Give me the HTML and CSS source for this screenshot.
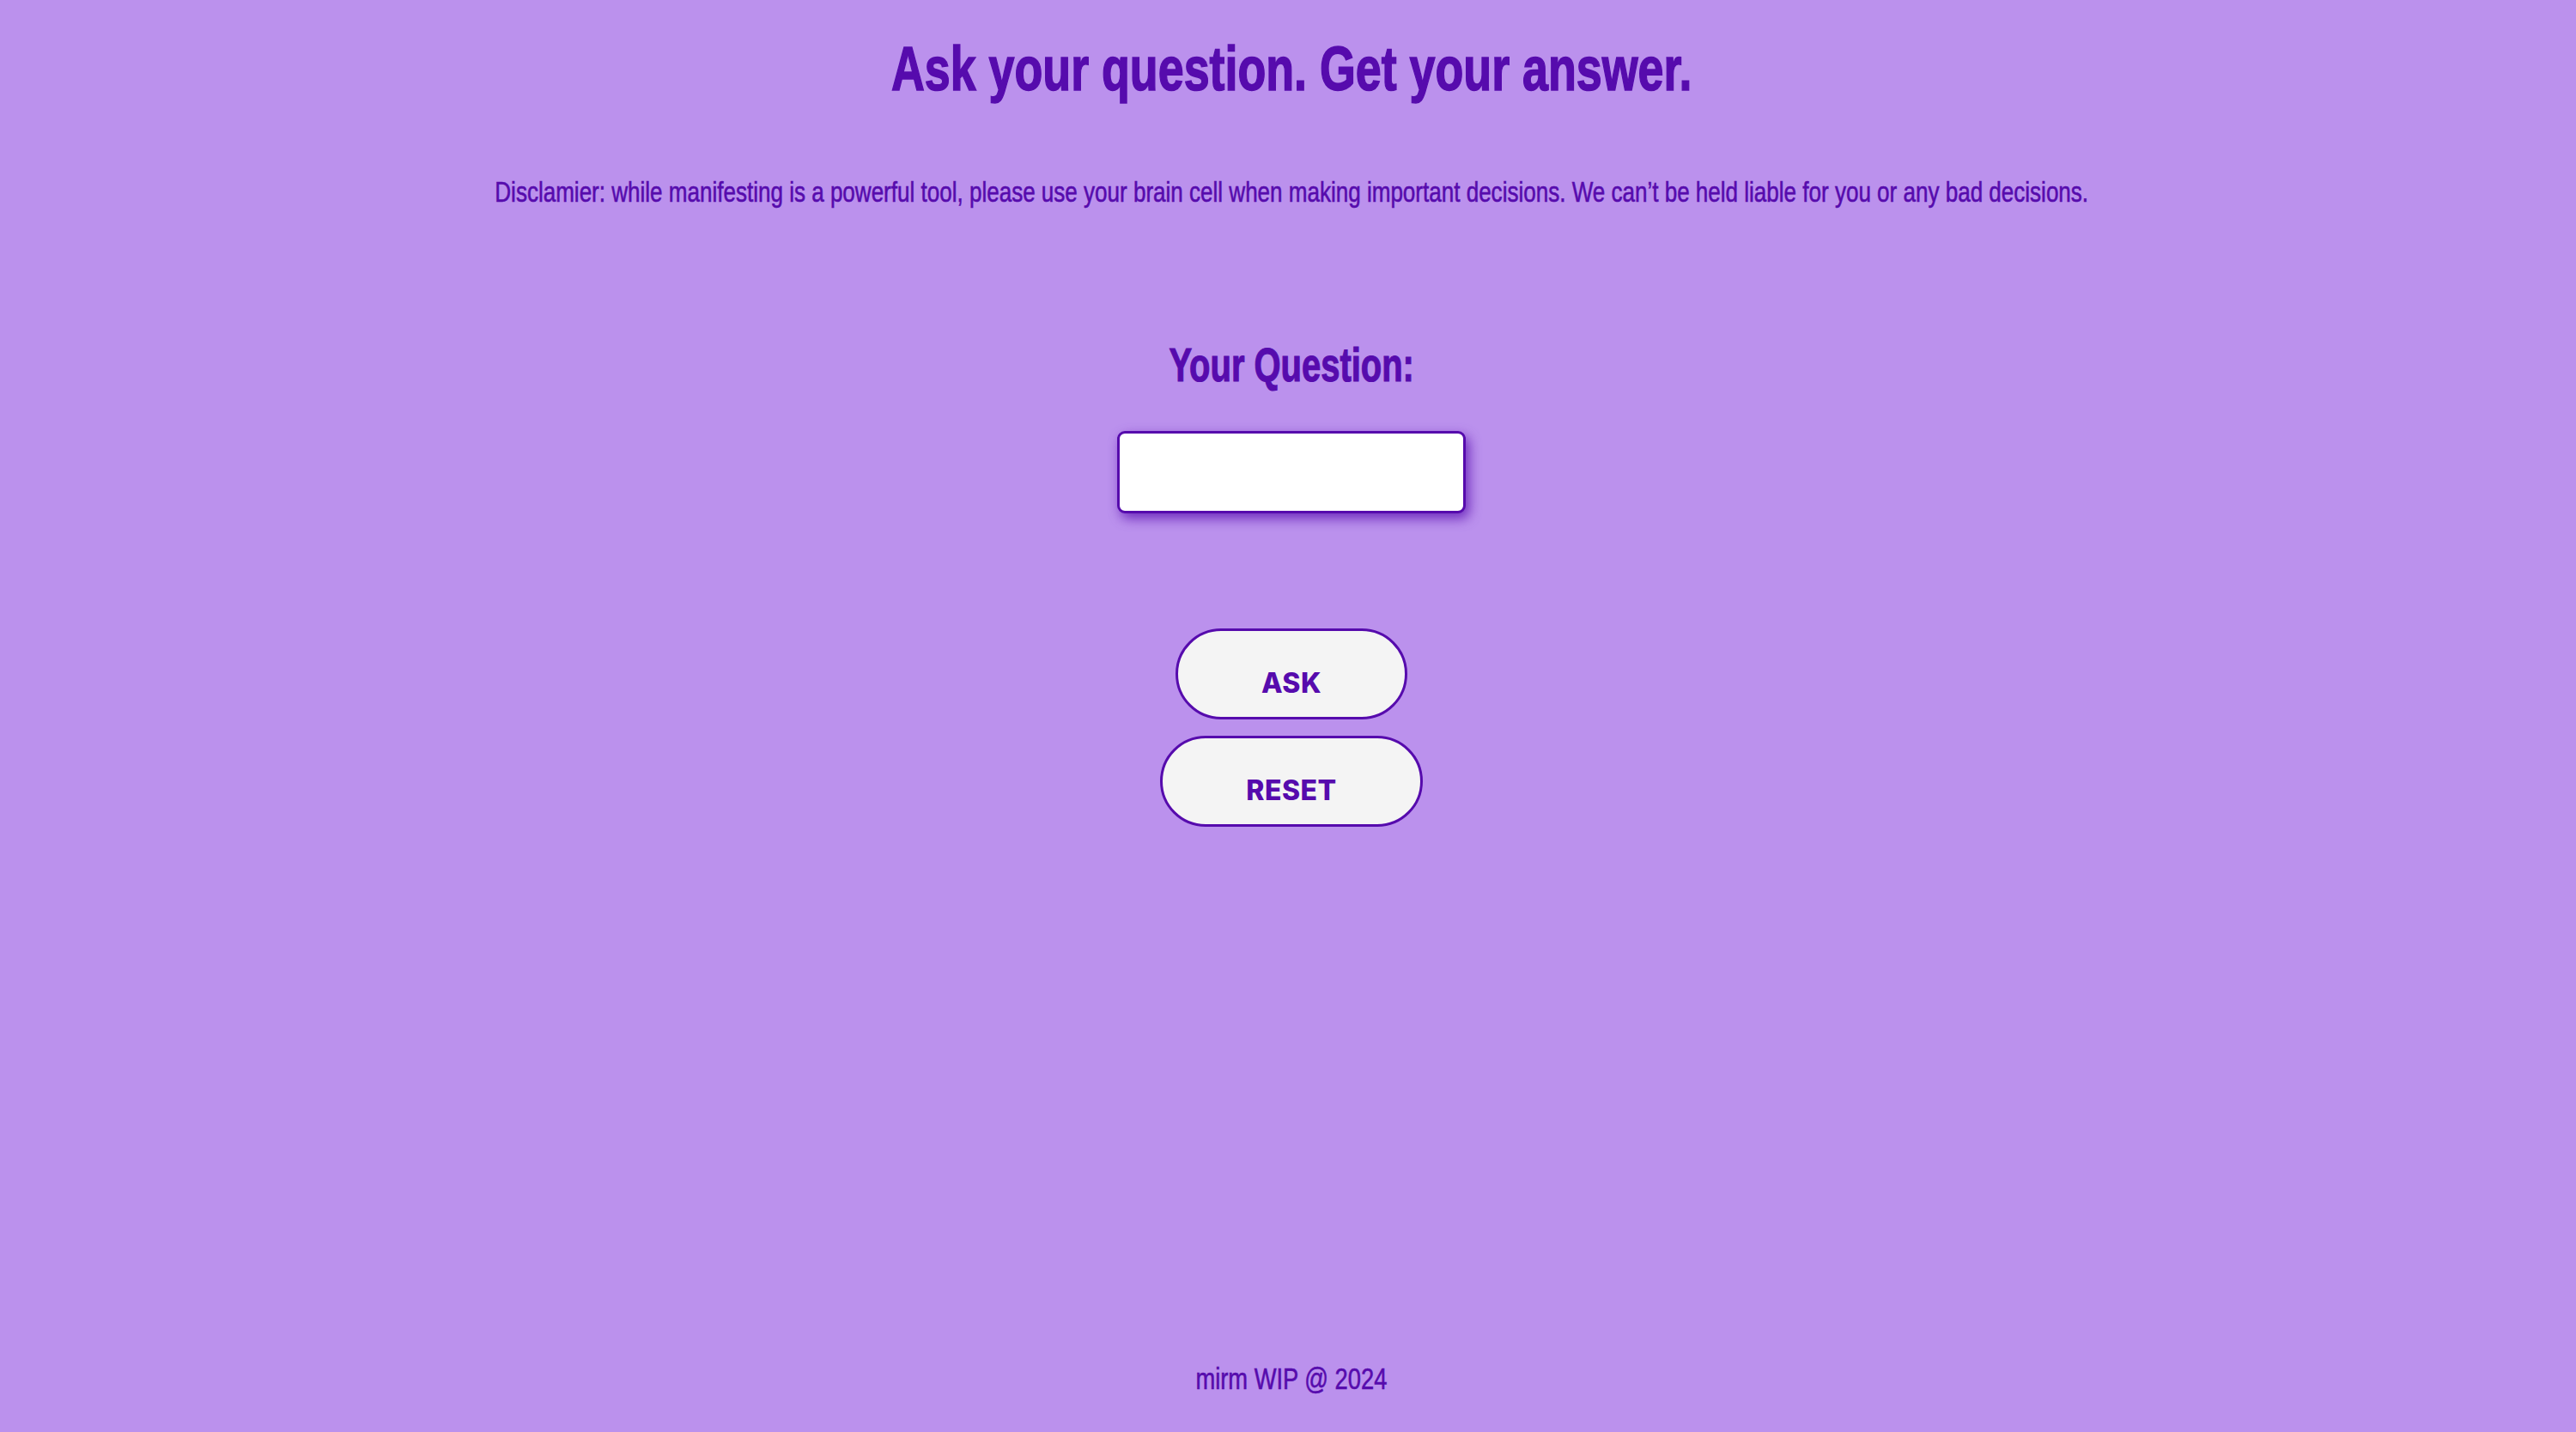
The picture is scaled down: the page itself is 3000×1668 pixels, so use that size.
FILE: index.html
```html
<!DOCTYPE html>
<html lang="en">
<head>
<meta charset="utf-8">
<title>Ask your question</title>
<link rel="stylesheet" href="styles.css">
</head>
<body>
<div class="page">
  <header class="header">
    <h1 class="title"><span class="squeeze squeeze-title">Ask your question. Get your answer.</span></h1>
    <p class="disclaimer"><span class="squeeze squeeze-text">Disclamier: while manifesting is a powerful tool, please use your brain cell when making important decisions. We can’t be held liable for you or any bad decisions.</span></p>
  </header>
  <main class="ask">
    <label class="label" for="q"><span class="squeeze squeeze-label">Your Question:</span></label>
    <input class="question" id="q" type="text">
    <div class="actions">
      <button class="btn" type="button">ASK</button>
      <button class="btn" type="button">RESET</button>
    </div>
  </main>
  <footer class="footer"><span class="squeeze squeeze-footer">mirm WIP @ 2024</span></footer>
</div>
</body>
</html>
```
FILE: styles.css
```css
html, body {
  margin: 0;
  padding: 0;
}
body {
  background: #bb91ed;
  color: #560bad;
  font-family: "Liberation Sans", Arial, sans-serif;
}
.page {
  min-height: 100vh;
  box-sizing: border-box;
  padding-left: 8px;
  display: flex;
  flex-direction: column;
  align-items: center;
}
.squeeze {
  display: inline-block;
  white-space: nowrap;
}
.squeeze-title { transform: scaleX(0.747); }
.squeeze-text { transform: scaleX(0.777); }
.squeeze-label { transform: scaleX(0.713); }
.squeeze-footer { transform: scaleX(0.78); }
.header {
  display: flex;
  flex-direction: column;
  align-items: center;
  padding-top: 44px;
}
.title {
  margin: 0;
  font-size: 72px;
  line-height: 1;
  font-weight: 700;
  -webkit-text-stroke: 1.6px #560bad;
}
.disclaimer {
  margin: 91px 0 0;
  font-size: 33.5px;
  line-height: 1;
  font-weight: 400;
  -webkit-text-stroke: 0.6px #560bad;
}
.ask {
  display: flex;
  flex-direction: column;
  align-items: center;
  margin-top: 156px;
}
.label {
  font-size: 56px;
  line-height: 1;
  font-weight: 700;
  -webkit-text-stroke: 1.2px #560bad;
}
.question {
  margin-top: 49px;
  width: 406px;
  height: 96px;
  box-sizing: border-box;
  border: 3px solid #560bad;
  border-radius: 9px;
  background: #fff;
  box-shadow: 4px 6px 14px rgba(86, 11, 173, 0.75);
  outline: none;
  font-size: 32px;
  padding: 0 16px;
}
.actions {
  margin-top: 134px;
  display: flex;
  flex-direction: column;
  align-items: center;
  gap: 19px;
}
.btn {
  font-family: Inter, "Liberation Sans", sans-serif;
  font-weight: 800;
  font-size: 32px;
  line-height: 39px;
  letter-spacing: 0.5px;
  color: #560bad;
  background: #f4f4f4;
  border: 3px solid #560bad;
  border-radius: 60px;
  padding: 41px 97px 20px;
  height: 106px;
  box-sizing: border-box;
  cursor: pointer;
}
.footer {
  margin-top: auto;
  padding-bottom: 45px;
  font-size: 35px;
  line-height: 1;
  -webkit-text-stroke: 0.6px #560bad;
}
```
